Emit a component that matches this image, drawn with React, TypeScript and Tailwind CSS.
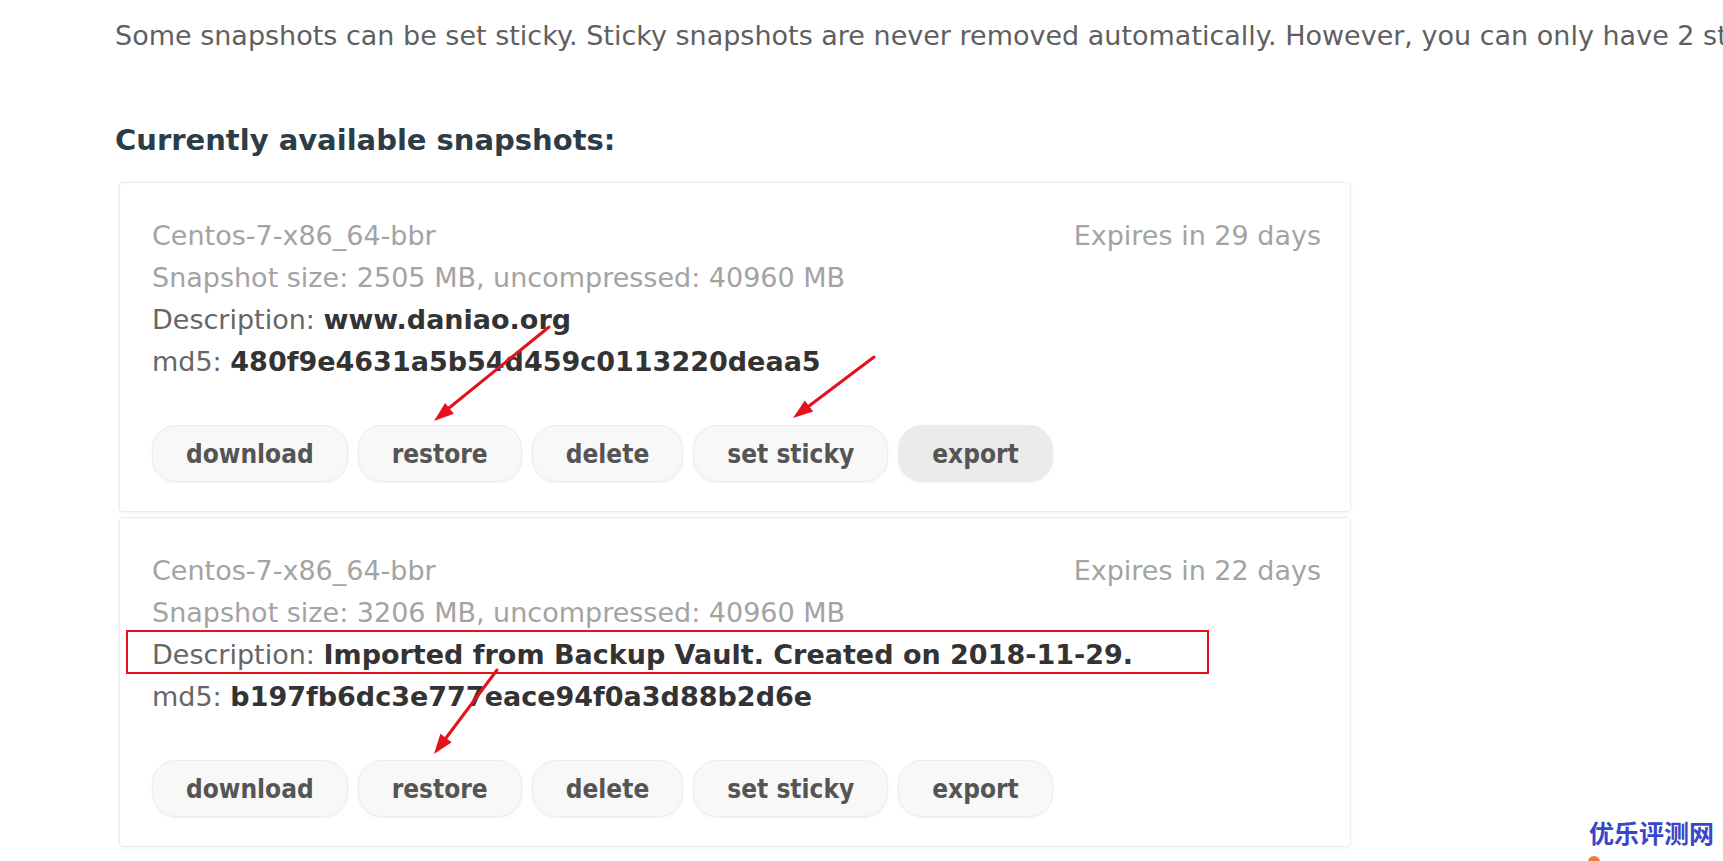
import React from 'react';

const SNAPSHOTS = [
  {
    name: 'Centos-7-x86_64-bbr',
    expires: 'Expires in 29 days',
    size: 'Snapshot size: 2505 MB, uncompressed: 40960 MB',
    description: 'www.daniao.org',
    md5: '480f9e4631a5b54d459c0113220deaa5',
    hovered: 'export',
  },
  {
    name: 'Centos-7-x86_64-bbr',
    expires: 'Expires in 22 days',
    size: 'Snapshot size: 3206 MB, uncompressed: 40960 MB',
    description: 'Imported from Backup Vault. Created on 2018-11-29.',
    md5: 'b197fb6dc3e777eace94f0a3d88b2d6e',
    hovered: '',
  },
];

const ACTIONS = ['download', 'restore', 'delete', 'set sticky', 'export'];

const Arrow: React.FC<{ line: [number, number, number, number]; head: string }> = ({ line, head }) => (
  <g>
    <line x1={line[0]} y1={line[1]} x2={line[2]} y2={line[3]} stroke="#e3121c" strokeWidth="3" strokeLinecap="round" />
    <polygon points={head} fill="#e3121c" />
  </g>
);

const App: React.FC = () => {
  return (
    <div className="relative w-full h-[861px] overflow-hidden bg-white font-['DejaVu_Sans',sans-serif]">
      <div className="pl-[115px]">
        {/* Intro */}
        <p className="pt-[17px] text-[27px] leading-[38px] text-[#5f5f5f] whitespace-nowrap">
          Some snapshots can be set sticky. Sticky snapshots are never removed automatically. However, you can only have 2 sticky snapshots.
        </p>

        <h2 className="mt-[65px] text-[29px] leading-[40px] font-bold text-[#2c3d47]">Currently available snapshots:</h2>

        {/* Snapshot cards */}
        <div className="mt-[22px] ml-[4px] flex flex-col gap-[5px]">
          {SNAPSHOTS.map((snap, i) => (
            <div
              key={i}
              className="w-[1232px] border border-[#ebebeb] rounded-[4px] shadow-[0_1px_4px_rgba(0,0,0,0.05)] pl-[32px] pr-[29px] pt-[32px] pb-[29px] text-[27px] leading-[42px]"
            >
              <div className="flex justify-between text-[#a3a3a3]">
                <span>{snap.name}</span>
                <span>{snap.expires}</span>
              </div>
              <div className="text-[#a3a3a3]">{snap.size}</div>
              <div className="text-[#666]">
                Description: <span className="font-bold text-[#333]">{snap.description}</span>
              </div>
              <div className="text-[#666]">
                md5: <span className="font-bold text-[#333]">{snap.md5}</span>
              </div>

              <div className="mt-[42px] flex gap-[10px]">
                {ACTIONS.map((a) => (
                  <button
                    key={a}
                    className={`h-[57px] px-[33px] rounded-[24px] border border-[#ececec] shadow-[0_1px_3px_rgba(0,0,0,0.05)] font-['DejaVu_Sans_Condensed','Liberation_Sans_Narrow','DejaVu_Sans',sans-serif] font-bold text-[26px] text-[#555] ${
                      snap.hovered === a ? 'bg-[#ebebeb]' : 'bg-[#f8f8f8]'
                    }`}
                  >
                    {a}
                  </button>
                ))}
              </div>
            </div>
          ))}
        </div>
      </div>

      {/* Annotations */}
      <div className="absolute left-[126px] top-[630px] w-[1083px] h-[44px] border-2 border-[#e3121c] pointer-events-none" />
      <svg className="absolute inset-0 pointer-events-none" width="1723" height="861">
        <Arrow line={[549, 327, 449, 408]} head="434,421 453.9,413.7 445.1,402.9" />
        <Arrow line={[874, 357, 809, 406]} head="793,418 813.2,411.6 804.8,400.4" />
        <Arrow line={[497, 670, 446, 738]} head="434,754 451.6,742.2 440.4,733.8" />
      </svg>

      {/* Watermark */}
      <div className="absolute left-[1589px] top-[817px] text-[25px] leading-[30px] font-bold text-[#3a46c8] font-['Noto_Sans_CJK_SC',sans-serif]">
        优乐评测网
      </div>
      <div className="absolute left-[1588px] top-[856px] w-[12px] h-[12px] rounded-full bg-[#f07a3a]" />
    </div>
  );
};

export default App;
